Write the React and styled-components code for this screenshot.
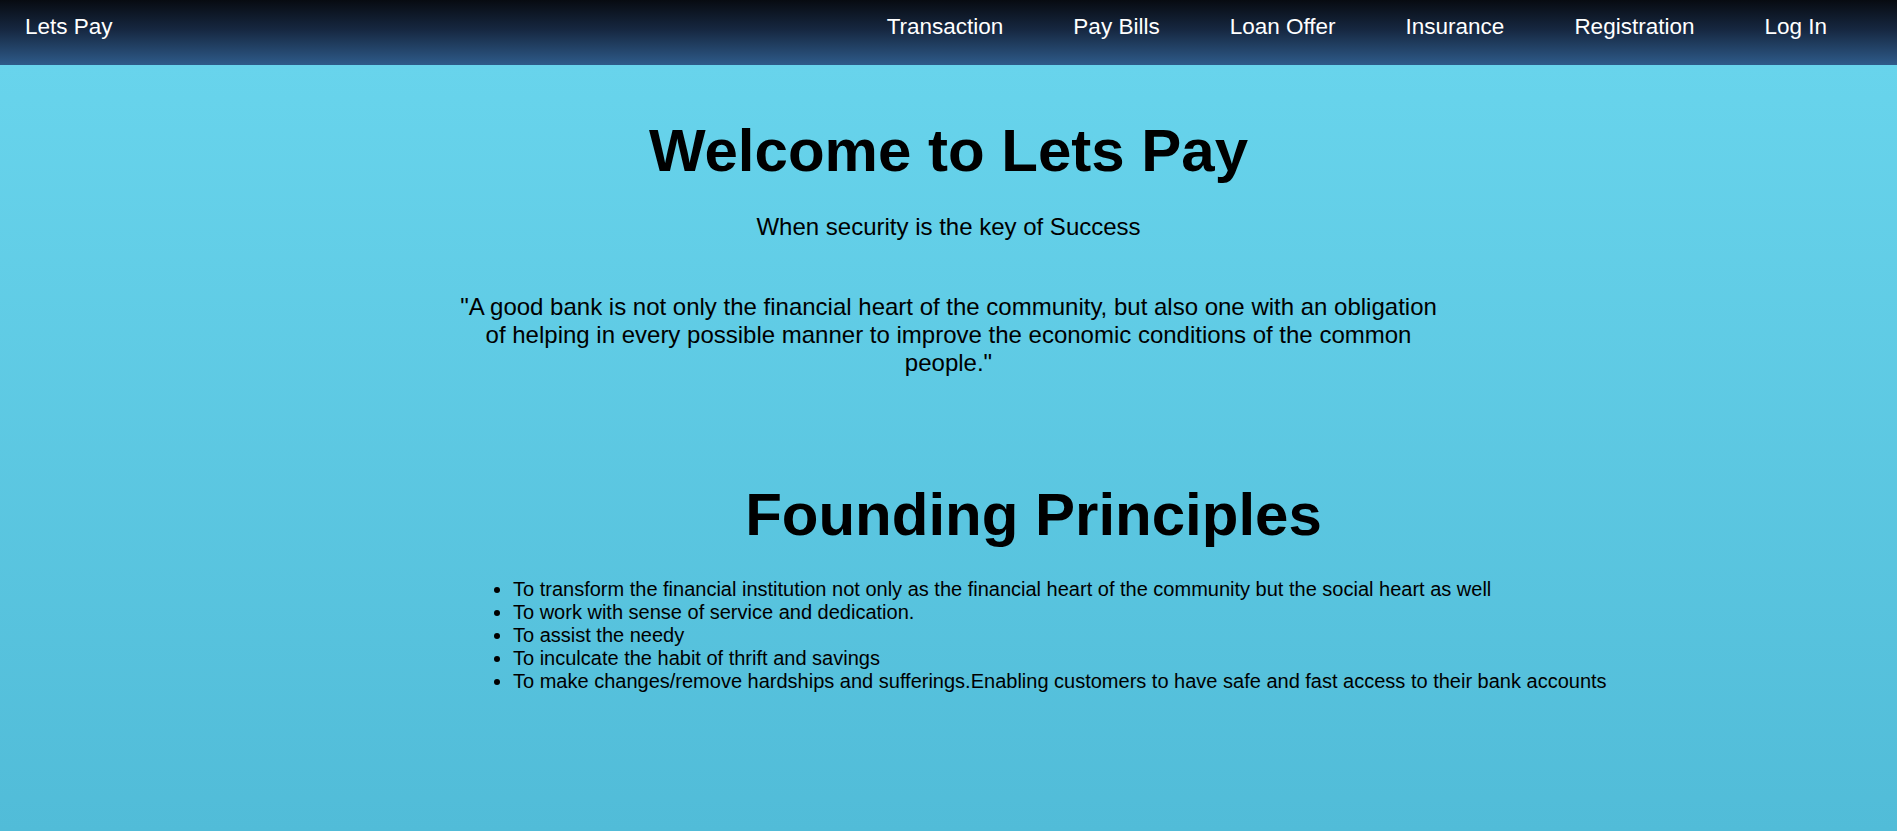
import React from "react";
import styled, { createGlobalStyle } from "styled-components";

const GlobalStyle = createGlobalStyle`
  html, body {
    margin: 0;
    padding: 0;
  }
  body {
    font-family: "Liberation Sans", Arial, Helvetica, sans-serif;
    color: #000;
  }
  * { box-sizing: border-box; }
`;

const Page = styled.div`
  min-height: 100vh;
  display: flex;
  flex-direction: column;
`;

const NavBar = styled.nav`
  height: 65px;
  flex-shrink: 0;
  display: flex;
  align-items: flex-start;
  justify-content: space-between;
  padding: 14px 70px 0 25px;
  background: linear-gradient(to bottom, #070b11 0%, #162740 45%, #2e5b8a 100%);
`;

const Brand = styled.a`
  font-size: 22.5px;
  color: #fff;
  text-decoration: none;
  line-height: normal;
`;

const NavList = styled.ul`
  list-style: none;
  margin: 0;
  padding: 0;
  display: flex;
  gap: 70px;
`;

const NavItem = styled.li`
  font-size: 22.5px;
  line-height: normal;
`;

const NavLink = styled.a`
  color: #fff;
  text-decoration: none;
`;

const Main = styled.main`
  flex: 1;
  padding: 51px 0 60px;
  background: linear-gradient(to bottom, #68d4ec 0%, #51bcd8 100%);
`;

const Hero = styled.section`
  text-align: center;
`;

const Title = styled.h1`
  margin: 0;
  font-size: 60px;
  font-weight: bold;
  line-height: normal;
`;

const Tagline = styled.p`
  margin: 28px 0 0;
  font-size: 24px;
  line-height: normal;
`;

const Quote = styled.p`
  margin: 52px auto 0;
  max-width: 990px;
  font-size: 24px;
  line-height: normal;
`;

const Principles = styled.section`
  margin-top: 103px;
`;

const SectionTitle = styled.h2`
  margin: 0;
  padding-left: 170px;
  text-align: center;
  font-size: 60px;
  font-weight: bold;
  line-height: normal;
`;

const PrincipleList = styled.ul`
  margin: 29px 0 0;
  padding-left: 513px;
  list-style: disc;
`;

const PrincipleItem = styled.li`
  font-size: 20px;
  line-height: 23px;
`;

const navItems = ["Transaction", "Pay Bills", "Loan Offer", "Insurance", "Registration", "Log In"];

const principles = [
  "To transform the financial institution not only as the financial heart of the community but the social heart as well",
  "To work with sense of service and dedication.",
  "To assist the needy",
  "To inculcate the habit of thrift and savings",
  "To make changes/remove hardships and sufferings.Enabling customers to have safe and fast access to their bank accounts",
];

export default function App() {
  return (
    <Page>
      <GlobalStyle />
      <NavBar>
        <Brand href="#">Lets Pay</Brand>
        <NavList>
          {navItems.map((item) => (
            <NavItem key={item}>
              <NavLink href="#">{item}</NavLink>
            </NavItem>
          ))}
        </NavList>
      </NavBar>
      <Main>
        <Hero>
          <Title>Welcome to Lets Pay</Title>
          <Tagline>When security is the key of Success</Tagline>
          <Quote>
            "A good bank is not only the financial heart of the community, but also one with an obligation of
            helping in every possible manner to improve the economic conditions of the common people."
          </Quote>
        </Hero>
        <Principles>
          <SectionTitle>Founding Principles</SectionTitle>
          <PrincipleList>
            {principles.map((p) => (
              <PrincipleItem key={p}>{p}</PrincipleItem>
            ))}
          </PrincipleList>
        </Principles>
      </Main>
    </Page>
  );
}
